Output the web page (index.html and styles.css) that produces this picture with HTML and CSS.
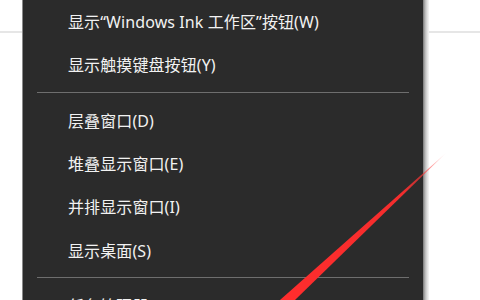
FILE: index.html
```html
<!DOCTYPE html>
<html lang="zh-CN">
<head>
<meta charset="utf-8">
<link rel="stylesheet" href="styles.css">
</head>
<body>
<div class="page">
  <div class="side side-left"></div>
  <div class="menu">
    <div class="item">显示“Windows Ink 工作区”按钮(W)</div>
    <div class="item">显示触摸键盘按钮(Y)</div>
    <div class="sep"></div>
    <div class="item">层叠窗口(D)</div>
    <div class="item">堆叠显示窗口(E)</div>
    <div class="item">并排显示窗口(I)</div>
    <div class="item">显示桌面(S)</div>
    <div class="sep"></div>
    <div class="item">任务管理器(K)</div>
  </div>
  <div class="shadow"></div>
  <div class="side side-right"></div>
</div>
<svg class="arrow" width="480" height="300" viewBox="0 0 480 300">
  <defs>
    <linearGradient id="fade" x1="287" y1="300" x2="446" y2="153" gradientUnits="userSpaceOnUse">
      <stop offset="0" stop-color="#ff2d2d" stop-opacity="1"/>
      <stop offset="0.72" stop-color="#ff2d2d" stop-opacity="0.95"/>
      <stop offset="0.9" stop-color="#ff3b3b" stop-opacity="0.55"/>
      <stop offset="1" stop-color="#ff4b4b" stop-opacity="0.05"/>
    </linearGradient>
  </defs>
  <polygon points="446,153 280,300 295,300" fill="url(#fade)"/>
</svg>
</body>
</html>
```
FILE: styles.css
```css
html, body {
  margin: 0;
  padding: 0;
  width: 480px;
  height: 300px;
  overflow: hidden;
  background: #ffffff;
}
.page {
  display: flex;
  height: 300px;
  background: linear-gradient(to bottom, transparent 31px, #e6e6e6 31px, #e6e6e6 33px, transparent 33px);
}
.side-left {
  width: 22px;
  flex: none;
}
.side-right {
  flex: 1;
}
.menu {
  width: 400px;
  flex: none;
  background: #2b2b2b;
  border-left: 1px solid #8a8a8a;
  font-family: "Noto Sans", "Noto Sans CJK SC", sans-serif;
  font-size: 16px;
  letter-spacing: 0.1px;
  color: #f2f2f2;
  overflow: hidden;
}
.shadow {
  width: 6px;
  flex: none;
  background: linear-gradient(to right, #777 0, #b5b5b5 2px, #dcdcdc 4px, #f6f6f6 6px);
}
.item {
  box-sizing: border-box;
  height: 43.33px;
  padding-top: 1px;
  line-height: 43px;
  padding-left: 45px;
  white-space: nowrap;
}
.sep {
  height: 1px;
  margin: 5.5px 14px 5.5px 14px;
  background: #6e6e6e;
}
.arrow {
  position: absolute;
  left: 0;
  top: 0;
  pointer-events: none;
}
```
